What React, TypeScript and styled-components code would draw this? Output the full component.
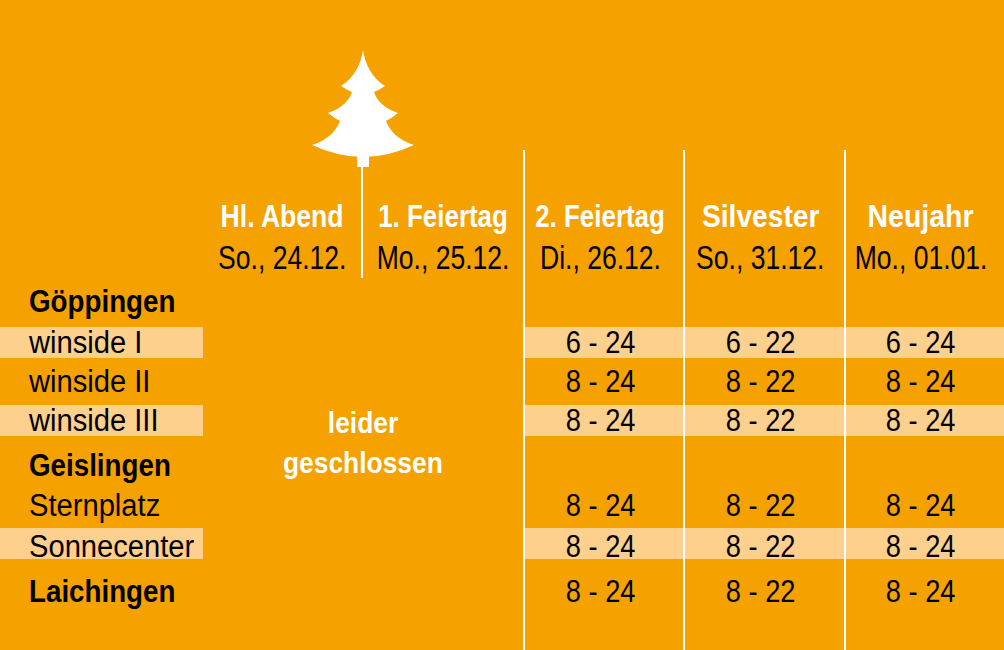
import React from 'react';
import styled, { createGlobalStyle } from 'styled-components';

const ORANGE = '#F5A200';
const PEACH = '#FDD08E';

const GlobalStyle = createGlobalStyle`
  html, body { margin: 0; padding: 0; background: ${ORANGE}; }
  body {
    font-family: "Liberation Sans", Arial, sans-serif;
    color: #000;
  }
`;

const Page = styled.div`
  width: 1004px;
  height: 650px;
  background: ${ORANGE};
  display: flex;
  overflow: hidden;
`;

/* narrow the glyphs horizontally to get the condensed face of the original */
const Squeeze = styled.span<{ $sx: number; $dy?: number; $origin?: string }>`
  display: inline-block;
  white-space: nowrap;
  transform: translateY(${(p) => p.$dy ?? 0}px) scaleX(${(p) => p.$sx});
  transform-origin: ${(p) => p.$origin ?? 'center'};
`;

const LabelColumn = styled.div`
  width: 203px;
  flex: none;
  padding-top: 288px;
  display: flex;
  flex-direction: column;
  gap: 8px;
`;

const LabelCell = styled.div<{ $band?: boolean; $bold?: boolean; $gap?: number }>`
  height: 31px;
  line-height: 31px;
  padding-left: 29px;
  margin-top: ${(p) => p.$gap ?? 0}px;
  background: ${(p) => (p.$band ? PEACH : 'transparent')};
  font-size: 31px;
  font-weight: ${(p) => (p.$bold ? 700 : 400)};
  white-space: nowrap;
`;

const ClosedBlock = styled.div`
  width: 320px;
  flex: none;
  display: flex;
  flex-direction: column;
`;

const TreeArea = styled.div`
  height: 167px;
  padding-left: 106px;
  display: flex;
  align-items: flex-end;
`;

const HeaderPair = styled.div`
  height: 111px;
  display: flex;
`;

const ClosedHeader = styled.div<{ $w: number }>`
  width: ${(p) => p.$w}px;
  display: flex;
  flex-direction: column;
  justify-content: flex-end;
  align-items: center;
`;

const Divider = styled.div`
  width: 2px;
  background: #fff;
`;

const Title = styled.div`
  font-size: 32px;
  font-weight: 700;
  line-height: 40px;
  color: #fff;
  white-space: nowrap;
`;

const DateLine = styled.div`
  font-size: 34px;
  line-height: 42px;
  white-space: nowrap;
`;

const ClosedNote = styled.div`
  margin-top: 125px;
  display: flex;
  flex-direction: column;
  align-items: center;
  color: #fff;
  font-weight: 700;
  font-size: 30px;
  line-height: 40px;
`;

const DayColumn = styled.div`
  flex: 1 1 0;
  min-width: 0;
  margin-top: 150px;
  border-left: 2px solid #fff;
  display: flex;
  flex-direction: column;
  gap: 8px;
`;

const DayHeader = styled.div`
  height: 130px;
  padding-top: 46px;
  padding-right: 8px;
  box-sizing: border-box;
  display: flex;
  flex-direction: column;
  align-items: center;
`;

const TimeCell = styled.div<{ $band?: boolean; $gap?: number }>`
  height: 31px;
  line-height: 31px;
  padding-right: 8px;
  margin-top: ${(p) => p.$gap ?? 0}px;
  text-align: center;
  background: ${(p) => (p.$band ? PEACH : 'transparent')};
  font-size: 31px;
  white-space: nowrap;
`;

type Row = {
  label: string;
  bold?: boolean;
  band?: boolean;
  gap?: number;
  dy?: number;
  times: string[] | null;
};

const rows: Row[] = [
  { label: 'Göppingen', bold: true, dy: -2, times: null },
  { label: 'winside I', band: true, times: ['6 - 24', '6 - 22', '6 - 24'] },
  { label: 'winside II', times: ['8 - 24', '8 - 22', '8 - 24'] },
  { label: 'winside III', band: true, times: ['8 - 24', '8 - 22', '8 - 24'] },
  { label: 'Geislingen', bold: true, gap: 6, times: null },
  { label: 'Sternplatz', dy: 1, times: ['8 - 24', '8 - 22', '8 - 24'] },
  { label: 'Sonnecenter', band: true, dy: 3, times: ['8 - 24', '8 - 22', '8 - 24'] },
  { label: 'Laichingen', bold: true, gap: 9, times: ['8 - 24', '8 - 22', '8 - 24'] },
];

type Day = { title: string; date: string; sx: number };

const closedDays: Day[] = [
  { title: 'Hl. Abend', date: 'So., 24.12.', sx: 0.83 },
  { title: '1. Feiertag', date: 'Mo., 25.12.', sx: 0.81 },
];

const days: Day[] = [
  { title: '2. Feiertag', date: 'Di., 26.12.', sx: 0.81 },
  { title: 'Silvester', date: 'So., 31.12.', sx: 0.88 },
  { title: 'Neujahr', date: 'Mo., 01.01.', sx: 0.89 },
];

const DATE_SX = 0.78;

const Tree = () => (
  <svg width="108" height="117" viewBox="309 50 108 117">
    <path
      fill="#fff"
      d="M363 50 C361 64 354 78 341 86 Q347 90 352 92 C349 101 342 108 328 113 Q334 118 340 121 C336 131 328 140 312 145 Q338 157 363 157 Q388 157 414 145 C398 140 390 131 386 121 Q392 118 398 113 C384 108 377 101 374 92 Q379 90 385 86 C372 78 365 64 363 50 Z"
    />
    <rect x="357" y="155" width="12" height="12" fill="#fff" />
  </svg>
);

const HeaderText = ({ d }: { d: Day }) => (
  <>
    <Title>
      <Squeeze $sx={d.sx}>{d.title}</Squeeze>
    </Title>
    <DateLine>
      <Squeeze $sx={DATE_SX}>{d.date}</Squeeze>
    </DateLine>
  </>
);

export default function App() {
  return (
    <>
      <GlobalStyle />
      <Page>
        <LabelColumn>
          {rows.map((r) => (
            <LabelCell key={r.label} $band={r.band} $bold={r.bold} $gap={r.gap}>
              <Squeeze $sx={r.bold ? 0.895 : 0.94} $dy={r.dy} $origin="left">
                {r.label}
              </Squeeze>
            </LabelCell>
          ))}
        </LabelColumn>

        <ClosedBlock>
          <TreeArea>
            <Tree />
          </TreeArea>
          <HeaderPair>
            <ClosedHeader $w={158}>
              <HeaderText d={closedDays[0]} />
            </ClosedHeader>
            <Divider />
            <ClosedHeader $w={160}>
              <HeaderText d={closedDays[1]} />
            </ClosedHeader>
          </HeaderPair>
          <ClosedNote>
            <Squeeze $sx={0.88}>leider</Squeeze>
            <Squeeze $sx={0.88}>geschlossen</Squeeze>
          </ClosedNote>
        </ClosedBlock>

        {days.map((d, i) => (
          <DayColumn key={d.title}>
            <DayHeader>
              <HeaderText d={d} />
            </DayHeader>
            {rows.map((r) => (
              <TimeCell key={r.label} $band={r.band} $gap={r.gap}>
                {r.times ? (
                  <Squeeze $sx={0.88} $dy={r.dy}>
                    {r.times[i]}
                  </Squeeze>
                ) : null}
              </TimeCell>
            ))}
          </DayColumn>
        ))}
      </Page>
    </>
  );
}
